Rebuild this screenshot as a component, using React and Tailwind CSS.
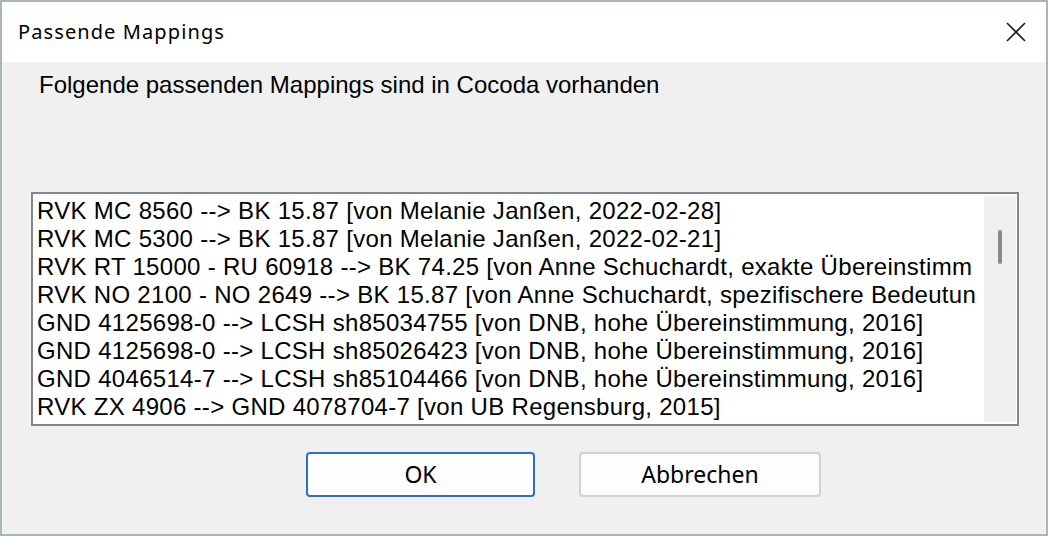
// App.jsx
const ROWS = [
  "RVK MC 8560 --> BK 15.87 [von Melanie Janßen, 2022-02-28]",
  "RVK MC 5300 --> BK 15.87 [von Melanie Janßen, 2022-02-21]",
  "RVK RT 15000 - RU 60918 --> BK 74.25 [von Anne Schuchardt, exakte Übereinstimm",
  "RVK NO 2100 - NO 2649 --> BK 15.87 [von Anne Schuchardt, spezifischere Bedeutun",
  "GND 4125698-0 --> LCSH sh85034755 [von DNB, hohe Übereinstimmung, 2016]",
  "GND 4125698-0 --> LCSH sh85026423 [von DNB, hohe Übereinstimmung, 2016]",
  "GND 4046514-7 --> LCSH sh85104466 [von DNB, hohe Übereinstimmung, 2016]",
  "RVK ZX 4906 --> GND 4078704-7 [von UB Regensburg, 2015]",
];

function CloseIcon() {
  return (
    <svg width="20" height="20" viewBox="0 0 20 20" fill="none">
      <path d="M1 1 L19 19 M19 1 L1 19" stroke="#1a1a1a" strokeWidth="1.6" />
    </svg>
  );
}

export default function App() {
  return (
    <div className="w-[1048px] h-[536px] border-2 border-[#a7b5b5] bg-[#f0f0f0] flex flex-col text-black">
      {/* Title bar */}
      <div className="h-[60px] shrink-0 bg-white flex items-center justify-between pl-4 pr-5">
        <span className="font-['Noto_Sans',sans-serif] text-[20px] tracking-[1.1px]">
          Passende Mappings
        </span>
        <CloseIcon />
      </div>

      {/* Message */}
      <div className="pl-[37px] pt-[9px] font-['Liberation_Sans',Arial,sans-serif] text-[24px] leading-[28px]">
        Folgende passenden Mappings sind in Cocoda vorhanden
      </div>

      {/* List box */}
      <div className="mt-[93px] ml-[29px] w-[988px] h-[234px] shrink-0 border-2 border-[#838790] bg-white flex">
        <div className="flex-1 min-w-0 overflow-hidden pl-[4px] pt-[3px] font-['Liberation_Sans',Arial,sans-serif] text-[24px] leading-[28px] tracking-[0.3px]">
          {ROWS.map((row, i) => (
            <div key={i} className="whitespace-nowrap">
              {row}
            </div>
          ))}
        </div>
        <div className="w-[32px] my-[2px] mr-[1px] bg-[#f0f0f0] pt-[34px] pl-[14px]">
          <div className="w-[4px] h-[34px] rounded-full bg-[#8a8a8a]" />
        </div>
      </div>

      {/* Buttons */}
      <div className="mt-[26px] pl-[304px] flex gap-[44px] font-['Noto_Sans',sans-serif] text-[23px]">
        <button className="w-[229px] h-[45px] rounded-[4px] border-2 border-[#2e6fc5] bg-[#fdfdfd] flex items-center justify-center">
          OK
        </button>
        <button className="w-[242px] h-[45px] rounded-[4px] border-2 border-[#d2d2d2] bg-[#fdfdfd] flex items-center justify-center">
          Abbrechen
        </button>
      </div>
    </div>
  );
}
